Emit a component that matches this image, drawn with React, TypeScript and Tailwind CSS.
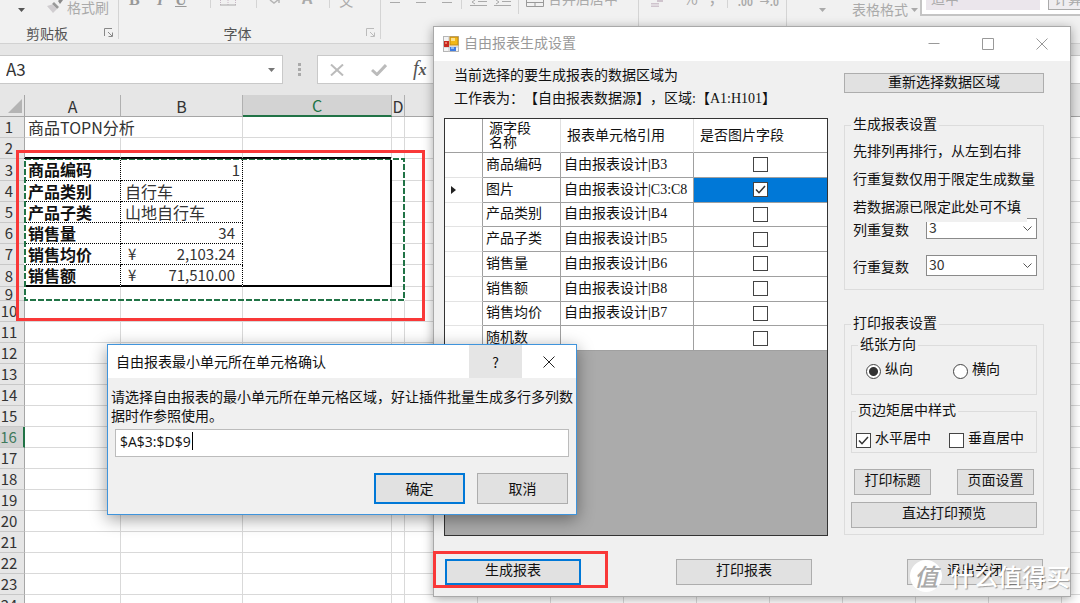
import type { ReactNode } from "react";
import clsx from "clsx";

const columns = ["A", "B", "C", "D", "E", "F", "G", "H", "I", "J", "K", "L", "M", "N"];

const heights: Record<number, string> = {
  3: "h-[22px] leading-[21px]",
  8: "h-[22px] leading-[21px]",
  9: "h-[14px] leading-[13px]",
};

const report: Record<number, { label: string; value: string; kind: "text" | "number" | "money" }> = {
  3: { label: "商品编码", value: "1", kind: "number" },
  4: { label: "产品类别", value: "自行车", kind: "text" },
  5: { label: "产品子类", value: "山地自行车", kind: "text" },
  6: { label: "销售量", value: "34", kind: "number" },
  7: { label: "销售均价", value: "2,103.24", kind: "money" },
  8: { label: "销售额", value: "71,510.00", kind: "money" },
};

const fields = [
  { name: "商品编码", cell: "自由报表设计|B3", picture: false },
  { name: "图片", cell: "自由报表设计|C3:C8", picture: true },
  { name: "产品类别", cell: "自由报表设计|B4", picture: false },
  { name: "产品子类", cell: "自由报表设计|B5", picture: false },
  { name: "销售量", cell: "自由报表设计|B6", picture: false },
  { name: "销售额", cell: "自由报表设计|B8", picture: false },
  { name: "销售均价", cell: "自由报表设计|B7", picture: false },
  { name: "随机数", cell: "", picture: false },
];

function Caret({ className }: { className?: string }) {
  return (
    <svg viewBox="0 0 7 4" className={clsx("h-1 w-[7px] shrink-0", className)} fill="currentColor">
      <path d="M0 0h7L3.5 4z" />
    </svg>
  );
}

function Launcher({ className }: { className?: string }) {
  return (
    <svg viewBox="0 0 10 10" className={clsx("h-[10px] w-[10px] shrink-0", className)} fill="none" stroke="currentColor">
      <path d="M.5 8V.5H8M4 4l4 4M8.5 4.5v4h-4" />
    </svg>
  );
}

function RibbonGroup({ label, className, children }: { label?: string; className: string; children: ReactNode }) {
  return (
    <div className={clsx("flex shrink-0 flex-col", className)}>
      <div className="flex h-6 items-start">{children}</div>
      {label && <div className="pr-6 text-center text-sm leading-[18px] text-[#555]">{label}</div>}
    </div>
  );
}

function Separator({ className }: { className: string }) {
  return <div className={clsx("w-px shrink-0 bg-[#d4d4d4]", className)} />;
}

function Ribbon() {
  return (
    <div className="flex h-11 shrink-0 overflow-hidden border-b border-[#d2d2d2] bg-[#f1f1f1] text-[#aaa]">
      <RibbonGroup label="剪贴板" className="w-[118px]">
        <Caret className="mt-2 ml-[18px] text-[#555]" />
        <svg viewBox="0 0 16 14" className="ml-[22px] h-[14px] w-4 shrink-0">
          <path d="M11 1l3-3 2 2-3 4z" fill="#8a8a8a" />
          <path d="M7 2l5 5-2 2L5 4z" fill="#999" />
          <path d="M5 4.500l5 4.500-4 4L0 6z" fill="#d0cdd0" />
        </svg>
        <span className="ml-1 shrink-0 text-sm leading-[14px]">格式刷</span>
      </RibbonGroup>
      <div className="flex w-0 items-end justify-end pb-[5px]">
        <Launcher className="mr-1 text-[#888]" />
      </div>
      <Separator className="h-[39px]" />
      <RibbonGroup label="字体" className="w-[261px]">
        <div className="-mt-[9px] flex shrink-0 font-['Liberation_Serif',serif] text-base leading-[18px] text-[#999]">
          <b className="ml-[10px] w-6">B</b>
          <i className="w-[22px] pl-1 font-bold">I</i>
          <span className="w-[14px] font-bold underline">U</span>
        </div>
        <Separator className="ml-[21px] h-2" />
        <svg viewBox="0 0 16 6" className="ml-[9px] h-[6px] w-4 shrink-0" fill="none" stroke="#c9b8c6">
          <path d="M.5 0v5M8 0v5M15.500 0v5" strokeDasharray="1 1" />
          <path d="M0 5h16" stroke="#aaa" />
        </svg>
        <Separator className="ml-5 h-2" />
        <svg viewBox="0 0 12 5" className="ml-3 h-[5px] w-3 shrink-0" fill="none" stroke="#b5b5b5" strokeWidth="1.500">
          <path d="M1 0l4 3 4-3M10 0v3" />
        </svg>
        <span className="-mt-[12px] ml-[21px] shrink-0 text-base leading-[18px] font-bold">A</span>
        <Separator className="ml-[17px] h-2" />
        <span className="-mt-[9px] ml-[9px] shrink-0 text-sm leading-[18px]">文</span>
      </RibbonGroup>
      <div className="flex w-0 items-end justify-end pb-[5px]">
        <Launcher className="mr-1 text-[#bbb]" />
      </div>
      <Separator className="h-[39px]" />
      <RibbonGroup className="w-[257px]">
        <div className="mt-[2px] ml-[9px] flex shrink-0 gap-4">
          <div className="h-px w-[10px] bg-[#aaa]" />
          <div className="h-px w-[10px] bg-[#aaa]" />
          <div className="h-px w-[10px] bg-[#aaa]" />
        </div>
        <Separator className="ml-[9px] h-[9px]" />
        <svg viewBox="0 0 17 6" className="ml-2 h-[6px] w-[17px] shrink-0" fill="none" stroke="#aaa">
          <path d="M8 1.500h9M0 5.500h17M5 0L2 2l3 2" />
        </svg>
        <svg viewBox="0 0 17 6" className="ml-[7px] h-[6px] w-[17px] shrink-0" fill="none" stroke="#aaa">
          <path d="M8 1.500h9M0 5.500h17M2 0l3 2-3 2" />
        </svg>
        <Separator className="ml-[7px] h-[14px]" />
        <svg viewBox="0 0 18 7" className="ml-[7px] h-[7px] w-[18px] shrink-0" fill="none" stroke="#999">
          <path d="M.5 0v6.500h17V0M0 2.500h18M9 2v4" />
        </svg>
        <span className="-mt-[11px] ml-1 shrink-0 text-sm leading-[18px]">合并后居中</span>
      </RibbonGroup>
      <Separator className="h-[39px]" />
      <RibbonGroup className="w-[147px]">
        <svg viewBox="0 0 12 8" className="ml-3 h-2 w-3 shrink-0" fill="#cfc4cd">
          <path d="M0 3h8v1.500H0zM0 5.500h8V7H0zM6 0h6v2H6z" />
        </svg>
        <span className="-mt-[11px] ml-5 shrink-0 text-base leading-[18px]">%</span>
        <span className="-mt-[14px] ml-[12px] shrink-0 text-lg leading-[18px]">,</span>
        <Separator className="ml-3 h-2" />
        <span className="-mt-[5px] ml-[10px] shrink-0 text-[10px] leading-[14px] font-bold">.00</span>
        <span className="-mt-[5px] ml-[7px] shrink-0 text-[10px] leading-[14px] font-bold">→.0</span>
      </RibbonGroup>
      <Separator className="h-[39px]" />
      <div className="flex min-w-0 flex-1 items-start">
        <Caret className="mt-2 ml-8" />
        <span className="ml-[26px] shrink-0 text-sm leading-[19px]">表格格式</span>
        <Caret className="mt-2 ml-[3px]" />
        <div className="ml-[2px] flex h-4 flex-1 items-start border-b-2 border-l-2 border-[#c4c4c4] bg-white pl-1">
          <div className="h-[10px] w-[114px] shrink-0 bg-[#ebe6ec] pl-[5px] text-sm leading-[18px]">
            <span className="-mt-[11px] block">适中</span>
          </div>
          <div className="ml-2 h-[10px] w-24 shrink-0 border-b border-l border-[#aaa] bg-[#efedf0] pl-[5px] text-sm leading-[18px]">
            <span className="-mt-[11px] block">计算</span>
          </div>
        </div>
      </div>
    </div>
  );
}

function FormulaBar() {
  return (
    <div className="flex h-[51px] shrink-0 items-center bg-[#e6e6e6] text-[#bbb]">
      <div className="flex h-[29px] w-[283px] shrink-0 items-center border border-l-0 border-[#c9c9c9] bg-white">
        <input
          aria-label="名称框"
          defaultValue="A3"
          className="min-w-0 flex-1 bg-transparent pb-[2px] pl-[6px] text-[17px] text-[#333] outline-none"
        />
        <Caret className="mr-[7px] text-[#777]" />
      </div>
      <div className="ml-[15px] grid gap-[2px]">
        <i className="h-[3px] w-[3px] bg-[#aaa]" />
        <i className="h-[3px] w-[3px] bg-[#aaa]" />
        <i className="h-[3px] w-[3px] bg-[#aaa]" />
      </div>
      <div className="ml-4 flex h-[29px] flex-1 items-center border border-r-0 border-[#c9c9c9] bg-white">
        <svg viewBox="0 0 14 12" className="ml-3 h-3 w-[14px]" fill="none" stroke="currentColor" strokeWidth="2">
          <path d="M1 .5l12 11M13 .5l-12 11" />
        </svg>
        <svg viewBox="0 0 16 12" className="ml-[27px] h-3 w-4" fill="none" stroke="currentColor" strokeWidth="3">
          <path d="M1 6l5 4.500L15 1" />
        </svg>
        <span className="ml-[26px] font-['Liberation_Serif',serif] text-xl leading-5 text-[#555] italic">
          f<span className="text-base font-bold">x</span>
        </span>
      </div>
    </div>
  );
}

function SheetRow({ row }: { row: number }) {
  const entry = report[row];
  const active = row === 16;
  const grid = "border-r border-b border-[#d9d9d9]";

  return (
    <tr className={heights[row] ?? "h-[21px] leading-5"}>
      <th
        className={clsx(
          "border-b border-b-[#c8c8c8] pr-[6px] text-[15px] font-normal",
          active ? "border-r-2 border-r-[#217346] bg-[#d3d3d3] text-[#3f7a5c]" : "border-r border-r-[#a6a6a6] bg-[#e6e6e6]",
        )}
      >
        {row}
      </th>
      {row === 1 && (
        <td colSpan={2} className={clsx(grid, "pl-[3px] whitespace-nowrap")}>
          商品TOPN分析
        </td>
      )}
      {entry && (
        <>
          <td
            className={clsx(
              "border-r border-r-black pl-[3px] font-bold whitespace-nowrap text-[#111] [border-right-style:dotted]",
              row === 8 ? "border-b-2 border-b-black leading-5" : "border-b border-b-black [border-bottom-style:dotted]",
            )}
          >
            {entry.label}
          </td>
          <td
            className={clsx(
              "border-r border-r-black pl-1 whitespace-nowrap [border-right-style:dotted]",
              row === 8 ? "border-b-2 border-b-black leading-5" : "border-b border-b-black [border-bottom-style:dotted]",
              entry.kind === "number" && "text-right text-[15px]",
              row === 3 ? "pr-[2px]" : "pr-[7px]",
            )}
          >
            {entry.kind === "money" ? (
              <span className="flex justify-between pl-[3px] text-[15px]">
                <span>¥</span>
                <span>{entry.value}</span>
              </span>
            ) : (
              entry.value
            )}
          </td>
        </>
      )}
      {row === 3 && <td rowSpan={6} className="border-r-2 border-b-2 border-black" />}
      {columns.map((name, i) => {
        if ((row === 1 && i < 2) || (entry && i < 3)) return null;
        return (
          <td key={name} className={row === 2 && i < 3 ? "border-r border-b-2 border-r-[#d9d9d9] border-b-black" : grid} />
        );
      })}
    </tr>
  );
}

function Sheet() {
  return (
    <div className="relative min-h-0 flex-1 overflow-hidden bg-white">
      <table className="w-[1135px] table-fixed border-separate border-spacing-0 text-base text-[#333]">
        <colgroup>
          <col className="w-[25px]" />
          <col className="w-[96px]" />
          <col className="w-[122px]" />
          <col className="w-[149px]" />
          <col className="w-[13px]" />
        </colgroup>
        <thead>
          <tr className="h-[22px] bg-[#e6e6e6] leading-[19px]">
            <th className="border-r border-b border-[#a6a6a6]">
              <svg viewBox="0 0 14 14" className="ml-2 h-[14px] w-[14px]" fill="#b4b4b4">
                <path d="M14 0v14H0z" />
              </svg>
            </th>
            {columns.map((name) => (
              <th
                key={name}
                className={clsx(
                  "border-r border-r-[#b0b0b0] pt-px font-normal",
                  name === "C" ? "border-b-2 border-b-[#217346] bg-[#d3d3d3] text-[#217346]" : "border-b border-b-[#a6a6a6]",
                )}
              >
                {name}
              </th>
            ))}
          </tr>
        </thead>
        <tbody>
          {Array.from({ length: 24 }, (_, i) => (
            <SheetRow key={i} row={i + 1} />
          ))}
        </tbody>
      </table>
      {/* copy outline round A3:D9 */}
      <svg className="absolute top-[63px] left-6 h-[143px] w-[381px]" fill="none" strokeWidth="2">
        <rect x="1" y="1" width="379" height="141" stroke="#fff" />
        <rect x="1" y="1" width="379" height="141" stroke="#217346" strokeDasharray="6 2" />
        <path d="M0 0.500H367" stroke="#111" strokeWidth="1" />
      </svg>
    </div>
  );
}

function Tick({ label, checked }: { label: string; checked?: boolean }) {
  return (
    <span className="relative inline-grid h-[15px] w-[15px] shrink-0">
      <input
        type="checkbox"
        aria-label={label}
        defaultChecked={checked}
        className="peer h-[15px] w-[15px] appearance-none border border-[#444] bg-white"
      />
      <svg
        viewBox="0 0 15 15"
        className="pointer-events-none absolute inset-0 hidden peer-checked:block"
        fill="none"
        stroke="#333"
        strokeWidth="1.500"
      >
        <path d="M3 7.500l3 3.200L12 4" />
      </svg>
    </span>
  );
}

function Button({ children, className, primary }: { children: ReactNode; className: string; primary?: boolean }) {
  return (
    <button
      type="button"
      className={clsx(
        "bg-[#e1e1e1] text-sm whitespace-nowrap text-[#111]",
        primary ? "border-2 border-[#0078d7]" : "border border-[#adadad]",
        className,
      )}
    >
      {children}
    </button>
  );
}

function Group({ title, className, children }: { title: string; className: string; children: ReactNode }) {
  return (
    <fieldset className={clsx("border border-[#dcdcdc]", className)}>
      <legend className="px-[2px] leading-4">{title}</legend>
      {children}
    </fieldset>
  );
}

function RepeatSelect({ id, label, value }: { id: string; label: string; value: string }) {
  return (
    <div className="flex items-end justify-between">
      <label htmlFor={id} className="leading-4">
        {label}
      </label>
      <div className="relative w-[111px]">
        <select
          id={id}
          defaultValue={value}
          className="block h-[21px] w-full appearance-none border border-[#8a8a8a] bg-white pb-[2px] pl-[2px] font-['Noto_Sans_CJK_SC',sans-serif] leading-[17px] text-[#333]"
        >
          <option>{value}</option>
        </select>
        <svg
          viewBox="0 0 9 6"
          className="pointer-events-none absolute top-2 right-[5px] h-[6px] w-[9px]"
          fill="none"
          stroke="#555"
        >
          <path d="M.5 .5l4 4 4-4" />
        </svg>
      </div>
    </div>
  );
}

function FieldTable() {
  return (
    <div className="h-[418px] overflow-hidden border border-[#333] bg-[#ababab]">
      <table className="h-[232px] w-full table-fixed border-separate border-spacing-0 bg-white text-left">
        <colgroup>
          <col className="w-[38px]" />
          <col className="w-[78px]" />
          <col className="w-[133px]" />
          <col />
        </colgroup>
        <thead>
          <tr className="h-[34px] leading-[14px]">
            <th className="border-r border-b border-[#a0a0a0]" />
            <th className="border-r border-b border-r-[#e0e0e0] border-b-[#a0a0a0] pl-[6px] font-normal">
              源字段
              <br />
              名称
            </th>
            <th className="border-r border-b border-r-[#e0e0e0] border-b-[#a0a0a0] pl-[6px] font-normal">报表单元格引用</th>
            <th className="border-b border-[#a0a0a0] pl-[6px] font-normal">是否图片字段</th>
          </tr>
        </thead>
        <tbody>
          {fields.map((field) => (
            <tr key={field.name} className="leading-5">
              <td className="border-r border-b border-r-[#a0a0a0] border-b-[#e3e3e3]">
                {field.picture && (
                  <svg viewBox="0 0 5 8" className="ml-[6px] h-2 w-[5px]" fill="#222">
                    <path d="M0 0l5 4-5 4z" />
                  </svg>
                )}
              </td>
              <td className="border-r border-b border-[#a0a0a0] pl-[3px] whitespace-nowrap">{field.name}</td>
              <td className="border-r border-b border-[#a0a0a0] pl-[3px] whitespace-nowrap">{field.cell}</td>
              <td className={clsx("border-b border-[#a0a0a0]", field.picture && "bg-[#0078d7]")}>
                <span className="flex justify-center">
                  <Tick label={field.name} checked={field.picture} />
                </span>
              </td>
            </tr>
          ))}
        </tbody>
      </table>
    </div>
  );
}

function FormIcon() {
  return (
    <svg viewBox="0 0 16 16" className="h-4 w-4">
      <rect x=".5" y=".5" width="15" height="15" fill="#f4f4f4" stroke="#b5b5b5" />
      <path d="M6 0v16M0 11h16" stroke="#c4c4c4" />
      <rect x="1" y="5" width="5" height="6" fill="#c8281e" />
      <rect x="2" y="6" width="2" height="2" fill="#ea7a66" />
      <rect x="7" y="1" width="8" height="8" fill="#f2b817" stroke="#c38a12" />
      <rect x="8" y="2" width="4" height="3" fill="#fce08a" />
      <rect x="7" y="11" width="6" height="4" fill="#3f7be0" />
      <rect x="8" y="11" width="3" height="2" fill="#8db8f6" />
    </svg>
  );
}

function OrientationOption({ id, label, checked }: { id: string; label: string; checked?: boolean }) {
  return (
    <div className="flex items-end gap-1">
      <input
        id={id}
        type="radio"
        name="orientation"
        defaultChecked={checked}
        className="h-[15px] w-[15px] appearance-none rounded-full border border-[#444] bg-white checked:bg-[radial-gradient(circle,#333_0_4px,#fff_5px)]"
      />
      <label htmlFor={id}>{label}</label>
    </div>
  );
}

function SettingsWindow() {
  return (
    <section className="absolute top-[26px] left-[433px] w-[638px] border border-[#a9a9a9] bg-[#f0f0f0] font-['Liberation_Serif','Noto_Sans_CJK_SC',sans-serif] text-sm text-[#111] shadow-[0_2px_10px_rgba(0,0,0,0.35)]">
      <header className="flex h-[34px] items-center bg-white pr-[22px] pl-[9px] text-[#999]">
        <FormIcon />
        <h2 className="ml-[5px] flex-1">自由报表生成设置</h2>
        <div className="flex items-center gap-[42px]">
          <button type="button" aria-label="最小化">
            <svg viewBox="0 0 12 12" className="h-3 w-3" stroke="currentColor">
              <path d="M.5 5.500h11" />
            </svg>
          </button>
          <button type="button" aria-label="最大化">
            <svg viewBox="0 0 12 12" className="h-3 w-3" fill="none" stroke="currentColor">
              <path d="M.5 .5h11v11H.5z" />
            </svg>
          </button>
          <button type="button" aria-label="关闭">
            <svg viewBox="0 0 12 12" className="h-3 w-3" stroke="currentColor">
              <path d="M.5 .5l11 11M11.500 .5l-11 11" />
            </svg>
          </button>
        </div>
      </header>

      <div className="pr-[26px] pb-[11px] pl-[10px]">
        <div className="flex gap-4">
          <div className="w-[384px] shrink-0 pt-[3px]">
            <div className="mb-2 pl-[10px] leading-[23px] whitespace-nowrap [text-spacing-trim:space-all]">
              <p>当前选择的要生成报表的数据区域为</p>
              <p>工作表为：【自由报表数据源】，区域:【A1:H101】</p>
            </div>
            <FieldTable />
          </div>

          <div className="min-w-0 flex-1 pt-3">
            <Button className="block h-5 w-full leading-[16px]">重新选择数据区域</Button>

            <Group title="生成报表设置" className="mt-6 px-[6px] pb-[13px]">
              <div className="pt-[5px] pl-[2px] whitespace-nowrap">
                <p className="leading-7">先排列再排行，从左到右排</p>
                <p className="leading-7">行重复数仅用于限定生成数量</p>
                <p className="relative z-10 mr-[10px] bg-[#f0f0f0] leading-[28px]">若数据源已限定此处可不填</p>
                <div className="-mt-[4px] grid gap-4">
                  <RepeatSelect id="column-repeat" label="列重复数" value="3" />
                  <RepeatSelect id="row-repeat" label="行重复数" value="30" />
                </div>
              </div>
            </Group>

            <Group title="打印报表设置" className="mt-[26px] px-[6px] pb-[6px]">
              <Group title="纸张方向" className="mt-[5px] px-[6px] pb-[15px]">
                <div className="flex gap-10 pt-2 pl-2 leading-[18px]">
                  <OrientationOption id="portrait" label="纵向" checked />
                  <OrientationOption id="landscape" label="横向" />
                </div>
              </Group>
              <Group title="页边矩居中样式" className="mt-2 px-1 pb-1">
                <div className="flex justify-between pt-[11px] pr-2 leading-[18px] whitespace-nowrap">
                  <label className="flex items-end gap-1">
                    <Tick label="水平居中" checked />
                    水平居中
                  </label>
                  <label className="flex items-end gap-1">
                    <Tick label="垂直居中" />
                    垂直居中
                  </label>
                </div>
              </Group>
              <div className="mt-4 flex justify-between px-[3px]">
                <Button className="h-[26px] w-[77px] pb-[3px] leading-[20px]">打印标题</Button>
                <Button className="h-[26px] w-[77px] pb-[3px] leading-[20px]">页面设置</Button>
              </div>
              <Button className="mt-[7px] block h-[26px] w-full pb-[3px] leading-[20px]">直达打印预览</Button>
            </Group>
          </div>
        </div>

        <div className="mt-[23px] flex justify-between px-px">
          <Button primary className="h-[26px] w-[136px] pb-[3px] leading-[20px]">
            生成报表
          </Button>
          <Button className="h-[26px] w-[136px] pb-[3px] leading-[20px]">打印报表</Button>
          <Button className="h-[26px] w-[136px] pb-[3px] leading-[20px]">退出关闭</Button>
        </div>
      </div>
    </section>
  );
}

function RangePrompt() {
  return (
    <section className="absolute top-[344px] left-[107px] w-[470px] border border-[#3f94dc] bg-[#f0f0f0] pb-[10px] text-sm text-[#111] shadow-[0_4px_16px_rgba(0,0,0,0.4)]">
      <header className="flex h-[33px] items-center bg-white pl-2">
        <h2 className="flex-1 pb-[2px]">自由报表最小单元所在单元格确认</h2>
        <button type="button" className="h-full w-[53px] bg-[#e5e5e5]">
          ?
        </button>
        <button type="button" aria-label="关闭" className="grid h-full w-[54px] place-items-center">
          <svg viewBox="0 0 12 12" className="h-3 w-3" stroke="#222">
            <path d="M.5 .5l11 11M11.500 .5l-11 11" />
          </svg>
        </button>
      </header>
      <div className="px-[7px] pt-[9px]">
        <label htmlFor="range" className="-mx-1 block leading-[19px]">
          请选择自由报表的最小单元所在单元格区域，好让插件批量生成多行多列数据时作参照使用。
        </label>
        <div className="relative mt-1">
          <input
            id="range"
            defaultValue="$A$3:$D$9"
            className="block h-[28px] w-full border border-[#bcbcbc] bg-white pb-[3px] pl-[4px] font-['Open_Sans',sans-serif] text-sm outline-none"
          />
          <span className="absolute top-[3px] left-[77px] h-[18px] w-px bg-black" />
        </div>
        <div className="mt-4 flex justify-end gap-3 pr-px">
          <Button primary className="h-[31px] w-[91px] pb-[2px]">
            确定
          </Button>
          <Button className="h-[31px] w-[91px] pb-[2px]">取消</Button>
        </div>
      </div>
    </section>
  );
}

function Watermark() {
  return (
    <div className="absolute top-[560px] left-[910px] flex items-center gap-2 whitespace-nowrap text-white">
      <span className="grid h-8 w-8 place-items-center rounded-full bg-white text-2xl leading-8 font-medium text-[#aaa] italic">
        值
      </span>
      <span className="text-2xl leading-8 font-medium [text-shadow:1px_1px_1px_rgba(0,0,0,0.35)]">什么值得买</span>
    </div>
  );
}

export default function App() {
  return (
    <main className="relative flex h-screen flex-col overflow-hidden bg-white font-['Noto_Sans_CJK_SC',sans-serif]">
      <Ribbon />
      <FormulaBar />
      <Sheet />
      <SettingsWindow />
      <div className="absolute top-[150px] left-4 h-[171px] w-[409px] border-[3px] border-[#f93838]" />
      <div className="absolute top-[551px] left-[433px] h-[37px] w-[175px] border-[3px] border-[#f93838]" />
      <RangePrompt />
      <Watermark />
    </main>
  );
}
